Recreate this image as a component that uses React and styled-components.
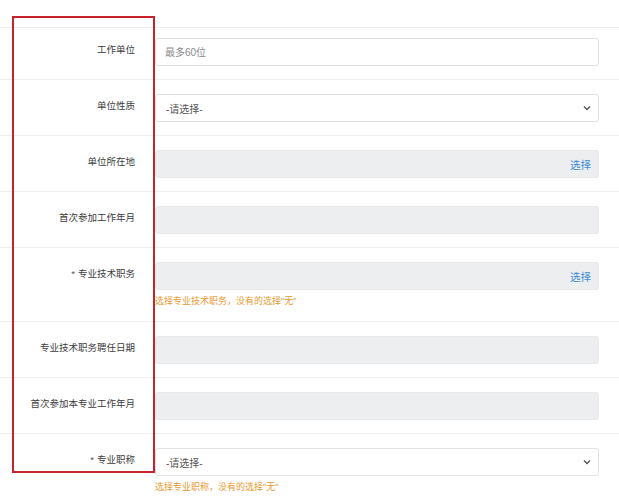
import styled, { createGlobalStyle } from "styled-components";

const GlobalStyle = createGlobalStyle`
    body {
        margin: 0;
        background: #fff;
        font-family: "Liberation Sans", "Noto Sans CJK SC", sans-serif;
    }
`

const Page = styled.div`
    position: relative;
    width: 619px;
    padding-top: 27px;
`

const Highlight = styled.div`
    position: absolute;
    left: 12px;
    top: 16px;
    width: 143px;
    height: 457px;
    box-sizing: border-box;
    border: 2px solid #c8232c;
    pointer-events: none;
`

const Row = styled.div`
    display: grid;
    grid-template-columns: 135px 444px;
    column-gap: 20px;
    padding: ${p => p.$first ? "10px" : "14px"} 0 ${p => p.$last ? "0" : "13px"};
    border-top: ${p => p.$first ? "1px solid #eeeeee" : "none"};
    border-bottom: ${p => p.$last ? "none" : "1px solid #eeeeee"};
`

const Label = styled.div`
    text-align: right;
    font-size: 9.5px;
    line-height: 16px;
    padding-top: 4px;
    color: #3c3c3c;
    white-space: nowrap;
`

const Star = styled.span`
    margin-right: 3px;
    color: #555;
`

const Field = styled.div`
    display: flex;
    align-items: center;
    justify-content: space-between;
    height: 28px;
    box-sizing: border-box;
    padding: 0 7px 0 10px;
    border: 1px solid ${p => p.$readonly ? "#e8e9ea" : "#e2e2e2"};
    border-radius: 3px;
    background: ${p => p.$readonly ? "#eceeef" : "#fff"};
    font-size: 10px;
    color: #555;
`

const TextInput = styled.input`
    width: 100%;
    height: 28px;
    box-sizing: border-box;
    padding: 0 9px;
    border: 1px solid #e2e2e2;
    border-radius: 3px;
    font-family: inherit;
    font-size: 10px;
    color: #555;
    outline: none;
    &::placeholder {
        color: #8a8a8a;
    }
`

const PickLink = styled.a`
    color: #3a8ad6;
    font-size: 10.5px;
    cursor: pointer;
`

const Hint = styled.div`
    margin-top: 5px;
    font-size: 9px;
    line-height: 13px;
    color: #e8992f;
`

const Chevron = () => (
    <svg width="8" height="6" viewBox="0 0 8 6">
        <path d="M1 1.5 L4 4.5 L7 1.5" fill="none" stroke="#555" strokeWidth="1.4" />
    </svg>
)

const rows = [
    { label: "工作单位", type: "text", placeholder: "最多60位" },
    { label: "单位性质", type: "select" },
    { label: "单位所在地", type: "pick" },
    { label: "首次参加工作年月", type: "readonly" },
    { label: "专业技术职务", required: true, type: "pick", hint: "选择专业技术职务，没有的选择\"无\"" },
    { label: "专业技术职务聘任日期", type: "readonly" },
    { label: "首次参加本专业工作年月", type: "readonly" },
    { label: "专业职称", required: true, type: "select", hint: "选择专业职称，没有的选择\"无\"" },
]

const Control = ({ row }) => {
    if (row.type === "text") return <TextInput placeholder={row.placeholder} />
    if (row.type === "select") return (
        <Field>
            <span>-请选择-</span>
            <Chevron />
        </Field>
    )
    if (row.type === "pick") return (
        <Field $readonly>
            <span />
            <PickLink>选择</PickLink>
        </Field>
    )
    return <Field $readonly />
}

const App = () => {
    return (
        <Page>
            <GlobalStyle />
            {rows.map((row, i) => (
                <Row key={row.label} $first={i === 0} $last={i === rows.length - 1}>
                    <Label>
                        {row.required && <Star>*</Star>}
                        {row.label}
                    </Label>
                    <div>
                        <Control row={row} />
                        {row.hint && <Hint>{row.hint}</Hint>}
                    </div>
                </Row>
            ))}
            <Highlight />
        </Page>
    )
}

export default App;
